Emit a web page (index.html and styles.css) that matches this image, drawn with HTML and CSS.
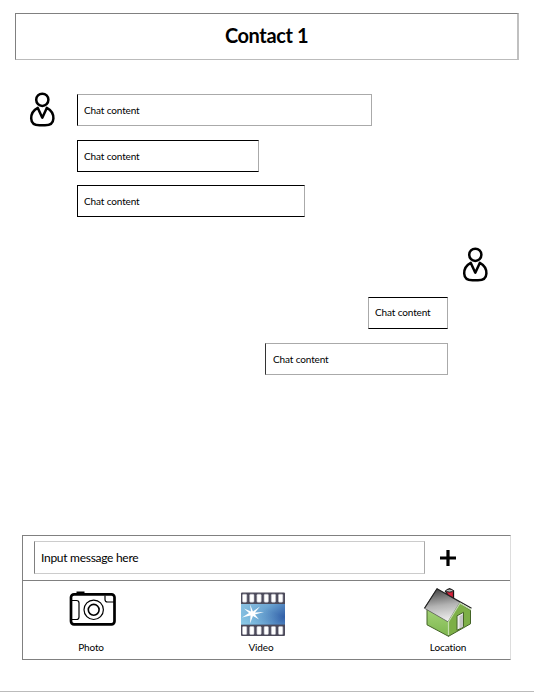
FILE: index.html
```
<!DOCTYPE html>
<html lang="en">
<head>
<meta charset="utf-8">
<title>Contact 1</title>
<link rel="stylesheet" href="styles.css">
</head>
<body>
<div class="page">
  <header class="header"><h1>Contact 1</h1></header>
  <main class="chat">
    <section class="incoming">
      <svg class="avatar" viewBox="0 0 26 36" aria-hidden="true">
        <circle cx="13.3" cy="7.8" r="6.1"/>
        <path d="M8.800 15.900C4.800 18 2.100 22 2.200 26.500C2.400 31.500 6 33.300 10.500 33.300H16C20.500 33.300 24.200 31.500 24.400 26.500C24.500 22 21.800 18 17.800 15.900L13.300 25.700Z"/>
      </svg>
      <div class="messages">
        <p class="bubble wide">Chat content</p>
        <p class="bubble short">Chat content</p>
        <p class="bubble medium">Chat content</p>
      </div>
    </section>
    <section class="outgoing">
      <svg class="avatar" viewBox="0 0 26 36" aria-hidden="true">
        <circle cx="13.3" cy="7.8" r="6.1"/>
        <path d="M8.800 15.900C4.800 18 2.100 22 2.200 26.500C2.400 31.500 6 33.300 10.500 33.300H16C20.500 33.300 24.200 31.500 24.400 26.500C24.500 22 21.800 18 17.800 15.900L13.300 25.700Z"/>
      </svg>
      <p class="bubble tiny">Chat content</p>
      <p class="bubble reply">Chat content</p>
    </section>
  </main>
  <footer class="composer">
    <div class="entry">
      <div class="field">Input message here</div>
      <svg class="plus" viewBox="0 0 16 16" aria-hidden="true"><path d="M8 0V16M0 8H16"/></svg>
    </div>
    <div class="actions">
      <div class="action photo">
        <svg viewBox="-2.5 1 48 48" aria-hidden="true">
          <path d="M8 5V3.500H14V5" fill="#000" stroke="#000" stroke-width="2"/>
          <rect x="1.500" y="5.300" width="43.500" height="30" rx="3" fill="#fff" stroke="#000" stroke-width="2.700"/>
          <g fill="none" stroke="#000" stroke-width="1.200">
            <path d="M2 11.500H7Q9.500 11.500 9.500 14V28Q9.500 30.500 7 30.500H2M35.500 6.500V10.500Q35.500 13 38 13H45"/>
            <circle cx="24.200" cy="20.800" r="9.700"/><circle cx="24.200" cy="20.800" r="5.400" stroke-width="1.600"/>
          </g>
        </svg>
        <span>Photo</span>
      </div>
      <div class="action video">
        <svg viewBox="-1 .5 48 48" aria-hidden="true">
          <defs>
            <linearGradient id="sky" x1="0" y1="0" x2="1" y2=".6"><stop stop-color="#8fc5e3"/><stop offset=".5" stop-color="#6ba4d1"/><stop offset="1" stop-color="#315fa8"/></linearGradient>
            <linearGradient id="sea" x1="0" y1="1" x2=".6" y2=".3"><stop stop-color="#8dcce8"/><stop offset="1" stop-color="#79b8de" stop-opacity="0"/></linearGradient>
          </defs>
          <rect x="3" y="3" width="44" height="43.500" rx="1" fill="#4c4a5a"/>
          <rect x="3" y="14.500" width="44" height="20.500" fill="url(#sky)"/>
          <rect x="3" y="14.500" width="44" height="20.500" fill="url(#sea)"/>
          <g fill="#fff" stroke="#bdbdc7" stroke-width=".6">
            <rect x="4.500" y="4.700" width="4.300" height="8" rx="1"/><rect x="11.700" y="4.700" width="4.300" height="8" rx="1"/><rect x="18.900" y="4.700" width="4.300" height="8" rx="1"/><rect x="26.100" y="4.700" width="4.300" height="8" rx="1"/><rect x="33.300" y="4.700" width="4.300" height="8" rx="1"/><rect x="40.500" y="4.700" width="4.300" height="8" rx="1"/>
            <rect x="4.500" y="37" width="4.300" height="8" rx="1"/><rect x="11.700" y="37" width="4.300" height="8" rx="1"/><rect x="18.900" y="37" width="4.300" height="8" rx="1"/><rect x="26.100" y="37" width="4.300" height="8" rx="1"/><rect x="33.300" y="37" width="4.300" height="8" rx="1"/><rect x="40.500" y="37" width="4.300" height="8" rx="1"/>
          </g>
          <path d="M12 15L15 22L22 17L17 23L26 22.500L17 25L21 30L15 26.500L12 34L12.500 26L4 28L11 23.500L6 19L13 22Z" fill="#fff"/>
        </svg>
        <span>Video</span>
      </div>
      <div class="action location">
        <svg viewBox="0 0.7 50 50" aria-hidden="true">
          <defs>
            <linearGradient id="roof" x1=".4" y1="0" x2=".55" y2="1"><stop stop-color="#444"/><stop offset=".5" stop-color="#b2b2b2"/><stop offset="1" stop-color="#f2f2f2"/></linearGradient>
            <linearGradient id="wall" x1="0" y1="0" x2="0" y2="1"><stop stop-color="#a3d276"/><stop offset="1" stop-color="#7db64e"/></linearGradient>
          </defs>
          <path d="M22.500 4L26.500 1.500L30.500 3.500V12L25.500 9Z" fill="#d5223b" stroke="#171717" stroke-width="1.300"/>
          <ellipse cx="26.500" cy="3.300" rx="3.400" ry="1.500" fill="#bbb" stroke="#222"/>
          <path d="M4 22L25.500 34V49L4 37.500Z" fill="url(#wall)" stroke="#426326"/>
          <path d="M25.500 34L37 16L47.500 23V36.500L25.500 49Z" fill="#7daf47" stroke="#426326"/>
          <path d="M14 1.500L1.500 21L25 34.500L37 15Z" fill="url(#roof)" stroke="#555" stroke-width=".7"/>
          <path d="M1.500 21L14 1.500L37 14.500L48.500 21" fill="none" stroke="#222" stroke-width="1.200"/>
          <path d="M25.500 48V34.500L37 16L48 22.500" fill="none" stroke="#c4dfad" stroke-width="1.200"/>
          <path d="M34 43V28.500L40.500 25V39.500Z" fill="#eee" stroke="#466428"/>
          <path d="M36.500 41.500V29L40 27V39.500Z" fill="#c5c5c5"/>
        </svg>
        <span>Location</span>
      </div>
    </div>
  </footer>
</div>
</body>
</html>
```
FILE: styles.css
```
* { box-sizing: border-box; }
body { margin: 0; background: #fff; color: #000; font: 10px/12px Lato, "Open Sans", sans-serif; letter-spacing: -.13px; font-variant-ligatures: none; }
h1, p { margin: 0; }
svg { overflow: visible; }
.page { height: 692px; padding-top: 13px; border-bottom: 1px solid #bbb; display: flex; flex-direction: column; }
.header { width: 504px; height: 47px; margin-left: 15px; padding-bottom: 3px; border: 1px solid #808080; border-right: 2px solid #c0c0c0; border-bottom-color: #bbb; display: flex; align-items: center; justify-content: center; }
.header h1 { font-size: 20px; line-height: 24px; font-weight: 700; letter-spacing: -.4px; }
.chat { height: 475px; padding-top: 31px; }
.avatar { display: block; width: 26px; height: 36px; fill: none; stroke: #000; stroke-width: 2.5; stroke-linejoin: round; }
.incoming { display: flex; gap: 22px; padding-left: 29px; }
.incoming .avatar { margin-top: 1px; }
.messages { display: flex; flex-direction: column; gap: 14px; padding-top: 3px; }
.bubble { height: 32px; padding: 9px 6px 0; border: 1px solid #000; border-right: 1px solid #aaa; white-space: nowrap; }
.wide { width: 295px; border-color: #aaa #aaa #aaa #000; }
.short { width: 182px; }
.medium { width: 228px; margin-top: -1px; }
.outgoing { display: flex; flex-direction: column; align-items: flex-end; padding: 30px 86px 0 0; }
.outgoing .avatar { margin-right: -40px; }
.tiny { width: 80px; margin-top: 14px; padding-top: 8px; border-left-color: #aaa; }
.reply { width: 183px; margin-top: 14px; padding-left: 7px; border-color: #aaa #aaa #aaa #333; }
.composer { width: 489px; height: 125px; margin-left: 22px; border: 1px solid #808080; border-right-color: #ddd; }
.entry { height: 45px; padding: 5px 0 0 11px; display: flex; align-items: flex-start; gap: 15px; border-bottom: 1px solid #808080; }
.field { width: 391px; height: 33px; padding: 9px 6px 0; border: 1px solid #ccc; border-left-color: #808080; border-right-color: #aaa; font-size: 12px; line-height: 14px; letter-spacing: -.28px; }
.plus { width: 16px; height: 16px; margin-top: 9px; stroke: #000; stroke-width: 3.2; }
.actions { display: flex; }
.action { width: 60px; display: flex; flex-direction: column; align-items: center; }
.action svg { width: 48px; height: 48px; margin-top: 9px; }
.action span { line-height: 12px; margin-top: 3px; }
.photo { margin-left: 38px; }
.video { margin-left: 110px; }
.location { margin-left: 127px; }
.action.location svg { width: 50px; height: 50px; margin-top: 7px; }
```
